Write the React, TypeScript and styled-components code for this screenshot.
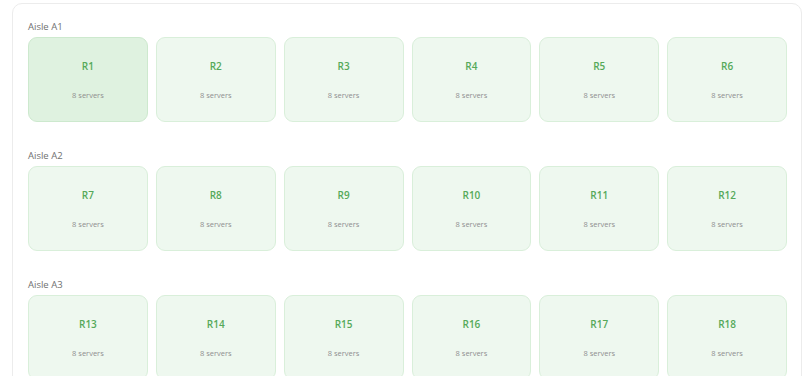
import React from 'react';
import styled, { createGlobalStyle } from 'styled-components';

const GlobalStyle = createGlobalStyle`
  html, body {
    margin: 0;
    padding: 0;
    background: #ffffff;
    font-family: 'Open Sans', 'Noto Sans', sans-serif;
    overflow: hidden;
  }
`;

interface Rack {
  id: string;
  servers: number;
}

interface Aisle {
  name: string;
  racks: Rack[];
}

const aisles: Aisle[] = [1, 2, 3].map((a) => ({
  name: `Aisle A${a}`,
  racks: Array.from({ length: 6 }, (_, i) => ({
    id: `R${(a - 1) * 6 + i + 1}`,
    servers: 8,
  })),
}));

const App: React.FC = () => {
  const activeRack = 'R1';

  return (
    <>
      <GlobalStyle />
      <Page>
        <Panel>
          {aisles.map((aisle) => (
            <AisleSection key={aisle.name}>
              <AisleLabel>{aisle.name}</AisleLabel>
              <RackGrid>
                {aisle.racks.map((rack) => (
                  <RackCard key={rack.id} active={rack.id === activeRack}>
                    <RackName>{rack.id}</RackName>
                    <RackServers>{rack.servers} servers</RackServers>
                  </RackCard>
                ))}
              </RackGrid>
            </AisleSection>
          ))}
        </Panel>
      </Page>
    </>
  );
};

const Page = styled.div`
  height: 376px;
  padding: 3px 4px 0 12px;
  box-sizing: border-box;
  overflow: hidden;
`;

const Panel = styled.div`
  border: 1px solid #ececec;
  border-radius: 10px;
  padding: 16px 14px 20px 15px;
  display: flex;
  flex-direction: column;
  gap: 27px;
  background: #ffffff;
`;

const AisleSection = styled.div`
  display: flex;
  flex-direction: column;
  gap: 4px;
`;

const AisleLabel = styled.div`
  font-size: 9.5px;
  line-height: 13px;
  color: #707070;
`;

const RackGrid = styled.div`
  display: grid;
  grid-template-columns: repeat(6, 1fr);
  gap: 8px;
`;

const RackCard = styled.div<{ active?: boolean }>`
  height: 85px;
  box-sizing: border-box;
  border-radius: 9px;
  border: 1px solid ${({ active }) => (active ? '#cde9ce' : '#d9efda')};
  background: ${({ active }) => (active ? '#dff2e0' : '#eef8ef')};
  display: flex;
  flex-direction: column;
  align-items: center;
  padding-top: 21px;
  gap: 16px;
`;

const RackName = styled.div`
  font-size: 10px;
  line-height: 14px;
  font-weight: 600;
  color: #55a959;
`;

const RackServers = styled.div`
  font-size: 7.5px;
  line-height: 12px;
  color: #8f8f8f;
`;

export default App;
